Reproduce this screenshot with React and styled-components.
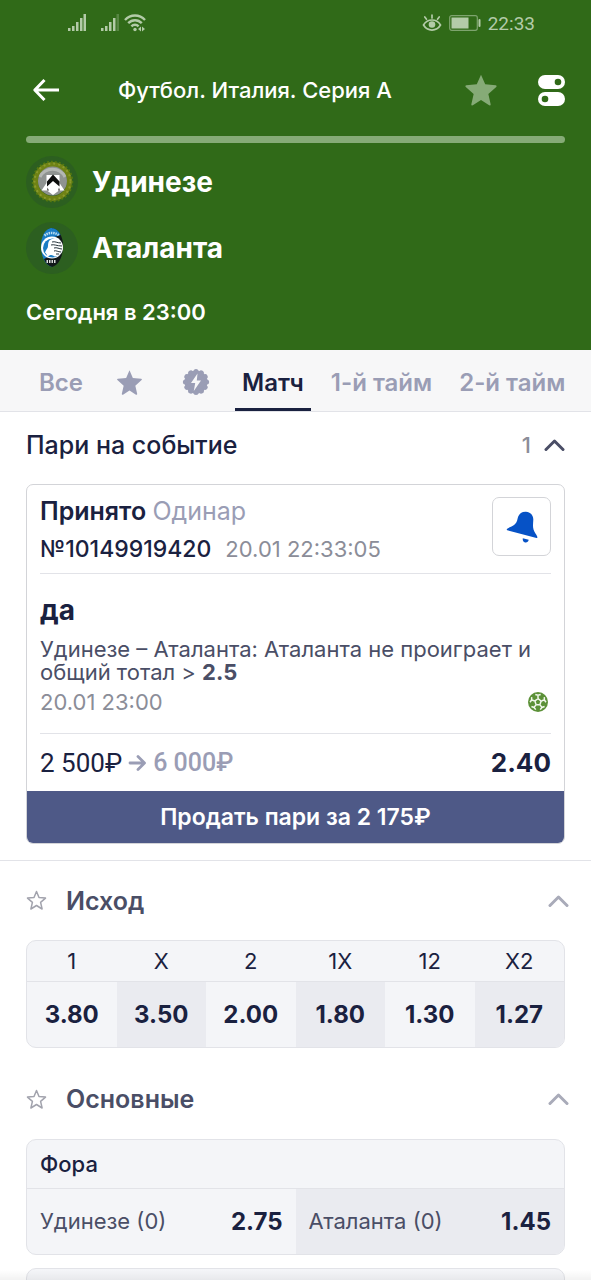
import { useState } from 'react';
import styled, { createGlobalStyle, ThemeProvider } from 'styled-components';

const theme = {
  fonts: {
    main: 'Inter, "Open Sans", sans-serif',
    money: 'Roboto, Inter, sans-serif',
  },
  colors: {
    green: '#306a18',
    greenLight: '#86ab77',
    ink: '#1a2140',
    text: '#4a4e66',
    muted: '#9a9db5',
    faint: '#8b8d98',
    line: '#e2e3e8',
    indigo: '#4e5987',
    panel: '#f4f5f8',
    panelAlt: '#eaebf0',
  },
};

const GlobalStyle = createGlobalStyle`
  *, *::before, *::after {
    box-sizing: border-box;
  }

  body {
    margin: 0;
    background: #fff;
    font-family: ${theme.fonts.main};
    color: ${theme.colors.ink};
  }

  h1, h2, p, ul {
    margin: 0;
    padding: 0;
  }

  button {
    padding: 0;
    border: 0;
    background: none;
    font-family: inherit;
    color: inherit;
    cursor: pointer;
  }

  svg {
    display: block;
    flex: none;
  }
`;

const Screen = styled.div`
  position: relative;
  display: flex;
  flex-direction: column;
  height: 100vh;
  overflow: hidden;
`;

const Header = styled.header`
  flex: none;
  padding: 0 26px 24px;
  background: ${props => props.theme.colors.green};
  color: #fff;
`;

const StatusBar = styled.div`
  display: flex;
  justify-content: space-between;
  align-items: center;
  height: 46px;
  padding: 0 30px 0 42px;
  color: #b3cba8;
`;

const StatusGroup = styled.div`
  display: flex;
  align-items: center;
  gap: ${props => props.$gap};
`;

const Clock = styled.time`
  font-family: ${props => props.theme.fonts.money};
  font-size: 19px;
`;

const TitleBar = styled.div`
  display: flex;
  align-items: center;
  height: 90px;
  padding: 0 0 2px 6px;
`;

const Title = styled.h1`
  flex: 1;
  padding-left: 58px;
  font-size: 22px;
  font-weight: 500;
  white-space: nowrap;
`;

const TitleActions = styled.div`
  display: flex;
  align-items: center;
  gap: 40px;
`;

const Progress = styled.div`
  height: 7px;
  border-radius: 4px;
  background: ${props => props.theme.colors.greenLight};
`;

const Teams = styled.ul`
  display: grid;
  gap: 14px;
  margin: 13px 0 24px;
  list-style: none;
`;

const Team = styled.li`
  display: flex;
  align-items: center;
  gap: 14px;
  height: 52px;
  font-size: 28px;
  font-weight: 700;
`;

const StartTime = styled.p`
  font-size: 22px;
  font-weight: 600;
  line-height: 28px;
`;

const Tabs = styled.nav`
  display: flex;
  flex: none;
  gap: 13px;
  height: 62px;
  padding: 0 14px 0 32px;
  background: #f7f7f8;
  border-bottom: 1px solid ${props => props.theme.colors.line};
`;

const Tab = styled.button`
  display: flex;
  flex: none;
  align-items: center;
  justify-content: center;
  min-width: 53px;
  padding: 6px 7px 0;
  border-bottom: 3px solid ${props => (props.$active ? props.theme.colors.ink : 'transparent')};
  color: ${props => (props.$active ? props.theme.colors.ink : props.theme.colors.muted)};
  font-size: 24px;
  font-weight: 600;
  white-space: nowrap;
`;

const Content = styled.main`
  flex: 1;
  min-height: 0;
  overflow-y: auto;
  scrollbar-width: none;
`;

const BetsSection = styled.section`
  padding: 0 26px 16px;
  border-bottom: 1px solid ${props => props.theme.colors.line};
`;

const BetsHeader = styled.div`
  display: flex;
  justify-content: space-between;
  align-items: center;
  height: 72px;
  padding-bottom: 6px;
`;

const BetsTitle = styled.h2`
  font-size: 25px;
  font-weight: 500;
`;

const BetsToggle = styled.button`
  display: flex;
  align-items: center;
  gap: 13px;
  font-size: 22px;
  font-weight: 500;

  span {
    color: ${props => props.theme.colors.faint};
  }
`;

const BetCard = styled.article`
  overflow: hidden;
  border: 1px solid #d3d4d8;
  border-radius: 7px;
`;

const BetBody = styled.div`
  padding: 0 13px;
`;

const BetTop = styled.div`
  display: flex;
  justify-content: space-between;
  align-items: flex-start;
  height: 89px;
  padding-top: 12px;
  border-bottom: 1px solid ${props => props.theme.colors.line};
`;

const BetStatus = styled.p`
  font-size: 25px;
  font-weight: 600;
  line-height: 28px;
`;

const BetKind = styled.span`
  font-weight: 400;
  color: ${props => props.theme.colors.muted};
`;

const BetNumber = styled.p`
  display: flex;
  gap: 14px;
  margin-top: 10px;
  font-size: 23px;
  font-weight: 500;
  line-height: 28px;
`;

const BetDate = styled.time`
  font-size: 22px;
  font-weight: 400;
  line-height: 28px;
  color: ${props => props.theme.colors.faint};
`;

const BellButton = styled.button`
  display: grid;
  place-items: center;
  width: 59px;
  height: 59px;
  border: 1px solid #d3d4d8;
  border-radius: 7px;
`;

const BetEvent = styled.div`
  height: 160px;
  padding-top: 18px;
  border-bottom: 1px solid ${props => props.theme.colors.line};
`;

const Pick = styled.h2`
  font-size: 28px;
  font-weight: 700;
  line-height: 36px;
`;

const Description = styled.p`
  margin-top: 10px;
  font-size: 22px;
  line-height: 23px;
  color: ${props => props.theme.colors.text};
`;

const EventFooter = styled.div`
  display: flex;
  justify-content: space-between;
  align-items: center;
  padding: 4px 3px 0 0;
`;

const Stake = styled.div`
  display: flex;
  align-items: center;
  gap: 6px;
  height: 57px;
  font-family: ${props => props.theme.fonts.money};
  font-size: 26px;
  color: ${props => props.theme.colors.muted};
`;

const StakeSum = styled.span`
  color: ${props => props.theme.colors.ink};
`;

const WinSum = styled.span`
  font-size: 25px;
  font-weight: 500;
`;

const Coefficient = styled.strong`
  margin-left: auto;
  font-family: ${props => props.theme.fonts.main};
  font-size: 26px;
  font-weight: 700;
  color: ${props => props.theme.colors.ink};
`;

const SellButton = styled.button`
  display: block;
  width: 100%;
  height: 52px;
  background: ${props => props.theme.colors.indigo};
  color: #fff;
  font-size: 23px;
  font-weight: 600;
`;

const Market = styled.section`
  padding: 0 26px 12px;
`;

const MarketHeader = styled.div`
  display: flex;
  align-items: center;
  height: 79px;
  margin-right: -4px;
`;

const MarketTitle = styled.h2`
  flex: 1;
  padding-left: 19px;
  font-size: 25px;
  font-weight: 600;
  color: ${props => props.theme.colors.text};
`;

const Panel = styled.div`
  overflow: hidden;
  border: 1px solid ${props => props.theme.colors.line};
  border-radius: 10px;
  background: ${props => props.theme.colors.panel};
`;

const OutcomeTable = styled.table`
  width: 100%;
  table-layout: fixed;
  border-collapse: collapse;

  th {
    height: 40px;
    padding: 0;
    border-bottom: 1px solid ${props => props.theme.colors.line};
    font-size: 22px;
    font-weight: 400;
  }

  td {
    padding: 0;
  }

  td:nth-child(even) {
    background: ${props => props.theme.colors.panelAlt};
  }
`;

const OddButton = styled.button`
  width: 100%;
  height: 65px;
  font-size: 24px;
  font-weight: 700;
`;

const PanelTitle = styled.div`
  height: 49px;
  padding: 0 13px;
  border-bottom: 1px solid ${props => props.theme.colors.line};
  font-size: 22px;
  font-weight: 500;
  line-height: 49px;
`;

const Handicaps = styled.div`
  display: grid;
  grid-template-columns: 1fr 1fr;
`;

const Handicap = styled.button`
  display: flex;
  justify-content: space-between;
  align-items: center;
  height: 65px;
  padding: 0 13px;
  font-size: 22px;
  color: ${props => props.theme.colors.text};

  &:nth-child(even) {
    background: ${props => props.theme.colors.panelAlt};
  }

  strong {
    font-size: 24px;
    font-weight: 700;
    color: ${props => props.theme.colors.ink};
  }
`;

const PanelStack = styled.div`
  display: grid;
  gap: 13px;
`;

const BottomShade = styled.div`
  position: absolute;
  right: 0;
  bottom: 0;
  left: 0;
  height: 10px;
  background: linear-gradient(to bottom, rgba(0, 0, 0, 0), rgba(0, 0, 0, 0.05));
  pointer-events: none;
`;

const STAR = 'M12 1.2l3.1 7.1 7.7.7c.7.1.9.8.4 1.3l-5.8 5.1 1.7 7.6c.1.7-.5 1.1-1.1.8L12 19.900l-6 3.900c-.6.3-1.2-.1-1.100-.8l1.700-7.600-5.800-5.100c-.5-.5-.3-1.200.4-1.300l7.700-.7z';

const StarIcon = ({ size, color }) => (
  <svg width={size} height={size} viewBox="0 0 24 25" fill={color}>
    <path d={STAR} />
  </svg>
);

const StarOutlineIcon = () => (
  <svg width="21" height="21" viewBox="0 0 21 21" fill="none" stroke="#a2a3ad" strokeWidth="1.5" strokeLinejoin="round">
    <path d="M10.5 1.5l2.5 6 6.5.6-4.9 4.3 1.5 6.6-5.6-3.5-5.6 3.5 1.5-6.6L1.5 8.1 8 7.5z" />
  </svg>
);

const ChevronIcon = ({ color }) => (
  <svg width="21" height="14" viewBox="0 0 21 14" fill="none" stroke={color} strokeWidth="3" strokeLinecap="round" strokeLinejoin="round">
    <path d="M2 11.5L10.5 3l8.5 8.5" />
  </svg>
);

const SignalIcon = ({ dimLast }) => (
  <svg width="18" height="18" viewBox="0 0 18 18" fill="currentColor">
    <rect x="0" y="14" width="2.5" height="3" />
    <rect x="4" y="12" width="2.5" height="5" />
    <rect x="8" y="8" width="2.5" height="9" />
    <rect x="12" y="4" width="2.5" height="13" />
    <rect x="15.5" y="0" width="2.5" height="17" opacity={dimLast ? 0.3 : 1} />
  </svg>
);

const WifiIcon = () => (
  <svg width="22" height="18" viewBox="0 0 22 18" fill="none" stroke="currentColor" strokeWidth="2.4">
    <path d="M1 6C6.500 0 15.500 0 21 6M4.200 9.200c3.800-4 9.800-4 13.600 0M7.400 12.300c2-2.100 5.200-2.100 7.200 0" />
    <circle cx="11" cy="15.500" r="1.700" fill="currentColor" stroke="none" />
    <path d="M17 12.500v5l-3-2.500zM18 12.500v5l3-2.500z" fill="currentColor" stroke="none" />
  </svg>
);

const EyeIcon = () => (
  <svg width="20" height="18" viewBox="0 0 20 18" fill="none" stroke="currentColor" strokeWidth="1.700" strokeLinecap="round">
    <path d="M1.500 11c4-6.700 13-6.700 17 0-4 6.700-13 6.700-17 0zM10 4V1M4.500 5.200L2.800 3M15.500 5.200L17.200 3" />
    <circle cx="10" cy="10.500" r="3.300" fill="currentColor" stroke="none" />
  </svg>
);

const BatteryIcon = () => (
  <svg width="32" height="16" viewBox="0 0 32 16" fill="none">
    <rect x=".7" y=".7" width="27.600" height="14.600" rx="2" stroke="currentColor" strokeWidth="1.200" opacity=".6" />
    <rect x="2.500" y="2.500" width="17" height="11" fill="currentColor" />
    <rect x="29.500" y="4" width="2" height="8" rx="1" fill="currentColor" />
  </svg>
);

const BackIcon = () => (
  <svg width="28" height="24" viewBox="0 0 28 24" fill="none" stroke="#fff" strokeWidth="3">
    <path d="M27 12H3M12.500 2L2.800 12l9.700 10" strokeLinejoin="round" />
  </svg>
);

const SwitchesIcon = () => (
  <svg width="27" height="31" viewBox="0 0 27 31">
    <rect width="27" height="14" rx="7" fill="#fff" />
    <rect y="17" width="27" height="14" rx="7" fill="#fff" />
    <circle cx="20" cy="7" r="3.300" fill={theme.colors.green} />
    <circle cx="7" cy="24" r="3.300" fill={theme.colors.green} />
  </svg>
);

const BoostIcon = () => (
  <svg width="28" height="28" viewBox="0 0 28 28">
    <g fill={theme.colors.muted}>
      <circle cx="14" cy="14" r="11.500" />
      {Array.from({ length: 12 }, (_, i) => (
        <circle key={i} cx="14" cy="3.400" r="2.500" transform={`rotate(${i * 30} 14 14)`} />
      ))}
    </g>
    <path d="M15.500 5.500L9 15h4.200l-1.400 8L19 12.500h-4.200z" fill="#f7f7f8" />
  </svg>
);

const UdineseLogo = () => (
  <svg width="52" height="52" viewBox="0 0 52 52">
    <circle cx="26" cy="26" r="26" fill="#2c5f20" />
    <circle cx="26.500" cy="25.500" r="17" fill="none" stroke="#6f8215" strokeWidth="5" />
    <circle cx="26.500" cy="25.500" r="18" fill="none" stroke="#8a9a2c" strokeWidth="2" strokeDasharray="2 3" />
    <circle cx="26.500" cy="25.500" r="20" fill="none" stroke="#55790f" strokeWidth="1.500" strokeDasharray="2 2" />
    <circle cx="26.500" cy="25" r="14.500" fill="#8f9391" />
    <path d="M14 21a14 14 0 0 1 25 0" fill="none" stroke="#b4b7b4" strokeWidth="3" />
    <path d="M20.500 19h13v8l5 7.500H33L27 39l-6-4.500h-5.500l5-7.500z" fill="#fff" />
    <path d="M27 18.500l6.500 7v5L27 25l-6 5.500v-5z" fill="#0c0d0c" />
    <path d="M21 34.500h2l-1.500-3zM32 34.500h2l-1-3z" fill="#42443f" />
  </svg>
);

const AtalantaLogo = () => (
  <svg width="52" height="52" viewBox="0 0 52 52">
    <circle cx="26" cy="26" r="26" fill="#2c5f20" />
    <path d="M26 6c-7 1-11.500 9-11 19s4 18 11 20z" fill="#1a7cc4" />
    <path d="M26 6c7 1 11.500 9 11 19s-4 18-11 20c-3-1-6-3-8-8l8-4z" fill="#11181a" />
    <path d="M17.500 13C21 4 31 4 34.500 13L26 16z" fill="#1a7cc4" />
    <circle cx="26" cy="25.500" r="11" fill="#fff" />
    <circle cx="26.500" cy="26" r="9.500" fill="#1a7cc4" />
    <path d="M24 18c4-3 11-1 12.500 6 .5 5-2 9-6 10.500-2 .5-4-2-6-1.500l-3 1.500c-1-2-1-3-2.500-4 1-3 3-4 3-6.500 0-2.500.5-5 2-6z" fill="#fff" />
    <path d="M26 20c3-1 5 1 9 1M25 23c3-1 6 1 11 1M28 26c3-1 5 1 8 1M28 29c2-1 4 1 7 1M30 32l3 0" fill="none" stroke="#27343b" strokeWidth="1" />
    <path d="M18.500 13.500c5-3.500 10-3.500 15 0" fill="none" stroke="#b9dcf0" strokeWidth="2.500" strokeDasharray="1.500 .8" />
    <path d="M20.500 39.500h10" stroke="#d9dcdc" strokeWidth="3" strokeDasharray="1.500 1" />
  </svg>
);

const BellIcon = () => (
  <svg width="32" height="32" viewBox="0 0 32 32" fill="#0652c6">
    <path d="M20 .700c4.500.3 7.500 3.700 7.300 8-.1 3.500-.8 6.500.3 10 1 3 2.700 4.300 3.800 7.300.2.700-.3 1.100-.9.900L1.300 19.300c-.7-.2-.8-1-.1-1.500 2.300-1.700 5.500-2.300 7.700-4.500 2.400-2.400 2.300-4.700 3.200-7.500C13.300 2.300 16.300.5 20 .700z" />
    <path d="M16.800 27.200l5.900 1.500c-.4 2-1.800 3-3.500 2.700-1.900-.3-2.800-2-2.400-4.200z" />
  </svg>
);

const BallIcon = () => (
  <svg width="20" height="20" viewBox="0 0 20 20">
    <circle cx="10" cy="10" r="10" fill="#5c9138" />
    {[0, 72, 144, 216, 288].map(angle => (
      <g key={angle} transform={`rotate(${angle} 10 10)`} stroke="#f2f8ed" strokeWidth="1.500" fill="none">
        <path d="M10 6.500V3M7.300 2.500L10 3.300l2.700-.8M10 6.700l3.100 2.300" />
      </g>
    ))}
  </svg>
);

const ArrowIcon = () => (
  <svg width="19" height="18" viewBox="0 0 19 18" fill="none" stroke={theme.colors.muted} strokeWidth="2.800" strokeLinecap="round" strokeLinejoin="round">
    <path d="M2 9h14M10 2.500L16.500 9 10 15.500" />
  </svg>
);

const tabs = [
  { id: 'all', label: 'Все' },
  { id: 'favorites', name: 'Избранное', icon: <StarIcon size={27} color={theme.colors.muted} /> },
  { id: 'boost', name: 'Быстрые', icon: <BoostIcon /> },
  { id: 'match', label: 'Матч' },
  { id: 'first', label: '1-й тайм' },
  { id: 'second', label: '2-й тайм' },
];

const outcomes = [
  ['1', '3.80'],
  ['X', '3.50'],
  ['2', '2.00'],
  ['1X', '1.80'],
  ['12', '1.30'],
  ['X2', '1.27'],
];

const handicaps = [
  ['Удинезе (0)', '2.75'],
  ['Аталанта (0)', '1.45'],
];

const MarketSection = ({ title, children }) => {
  const [open, setOpen] = useState(true);

  return (
    <Market>
      <MarketHeader>
        <button aria-label="В избранное"><StarOutlineIcon /></button>
        <MarketTitle>{title}</MarketTitle>
        <button aria-label="Свернуть" aria-expanded={open} onClick={() => setOpen(!open)}>
          <ChevronIcon color="#a9abb9" />
        </button>
      </MarketHeader>
      {open && children}
    </Market>
  );
};

const App = () => {
  const [activeTab, setActiveTab] = useState('match');
  const [betsOpen, setBetsOpen] = useState(true);

  return (
    <ThemeProvider theme={theme}>
      <GlobalStyle />
      <Screen>
        <Header>
          <StatusBar>
            <StatusGroup $gap="15px">
              <SignalIcon />
              <StatusGroup $gap="5px">
                <SignalIcon dimLast />
                <WifiIcon />
              </StatusGroup>
            </StatusGroup>
            <StatusGroup $gap="7px">
              <EyeIcon />
              <BatteryIcon />
              <Clock>22:33</Clock>
            </StatusGroup>
          </StatusBar>
          <TitleBar>
            <button aria-label="Назад"><BackIcon /></button>
            <Title>Футбол. Италия. Серия А</Title>
            <TitleActions>
              <button aria-label="В избранное">
                <StarIcon size={34} color={theme.colors.greenLight} />
              </button>
              <button aria-label="Настройки"><SwitchesIcon /></button>
            </TitleActions>
          </TitleBar>
          <Progress />
          <Teams>
            <Team><UdineseLogo />Удинезе</Team>
            <Team><AtalantaLogo />Аталанта</Team>
          </Teams>
          <StartTime>Сегодня в 23:00</StartTime>
        </Header>

        <Tabs>
          {tabs.map(tab => (
            <Tab
              key={tab.id}
              $active={tab.id === activeTab}
              aria-label={tab.name}
              onClick={() => setActiveTab(tab.id)}
            >
              {tab.icon || tab.label}
            </Tab>
          ))}
        </Tabs>

        <Content>
          <BetsSection>
            <BetsHeader>
              <BetsTitle>Пари на событие</BetsTitle>
              <BetsToggle aria-expanded={betsOpen} onClick={() => setBetsOpen(!betsOpen)}>
                <span>1</span>
                <ChevronIcon color={theme.colors.text} />
              </BetsToggle>
            </BetsHeader>
            {betsOpen && (
              <BetCard>
                <BetBody>
                  <BetTop>
                    <div>
                      <BetStatus>Принято <BetKind>Одинар</BetKind></BetStatus>
                      <BetNumber>
                        №10149919420
                        <BetDate>20.01 22:33:05</BetDate>
                      </BetNumber>
                    </div>
                    <BellButton aria-label="Уведомления"><BellIcon /></BellButton>
                  </BetTop>
                  <BetEvent>
                    <Pick>да</Pick>
                    <Description>
                      Удинезе – Аталанта: Аталанта не проиграет и общий тотал &gt; <b>2.5</b>
                    </Description>
                    <EventFooter>
                      <BetDate>20.01 23:00</BetDate>
                      <BallIcon />
                    </EventFooter>
                  </BetEvent>
                  <Stake>
                    <StakeSum>2 500₽</StakeSum>
                    <ArrowIcon />
                    <WinSum>6 000₽</WinSum>
                    <Coefficient>2.40</Coefficient>
                  </Stake>
                </BetBody>
                <SellButton>Продать пари за 2 175₽</SellButton>
              </BetCard>
            )}
          </BetsSection>

          <MarketSection title="Исход">
            <Panel>
              <OutcomeTable>
                <thead>
                  <tr>
                    {outcomes.map(([name]) => <th key={name} scope="col">{name}</th>)}
                  </tr>
                </thead>
                <tbody>
                  <tr>
                    {outcomes.map(([name, odd]) => (
                      <td key={name}><OddButton>{odd}</OddButton></td>
                    ))}
                  </tr>
                </tbody>
              </OutcomeTable>
            </Panel>
          </MarketSection>

          <MarketSection title="Основные">
            <PanelStack>
              <Panel>
                <PanelTitle>Фора</PanelTitle>
                <Handicaps>
                  {handicaps.map(([name, odd]) => (
                    <Handicap key={name}>
                      {name}
                      <strong>{odd}</strong>
                    </Handicap>
                  ))}
                </Handicaps>
              </Panel>
              <Panel>
                <PanelTitle />
              </Panel>
            </PanelStack>
          </MarketSection>
        </Content>
        <BottomShade />
      </Screen>
    </ThemeProvider>
  );
};

export default App;
